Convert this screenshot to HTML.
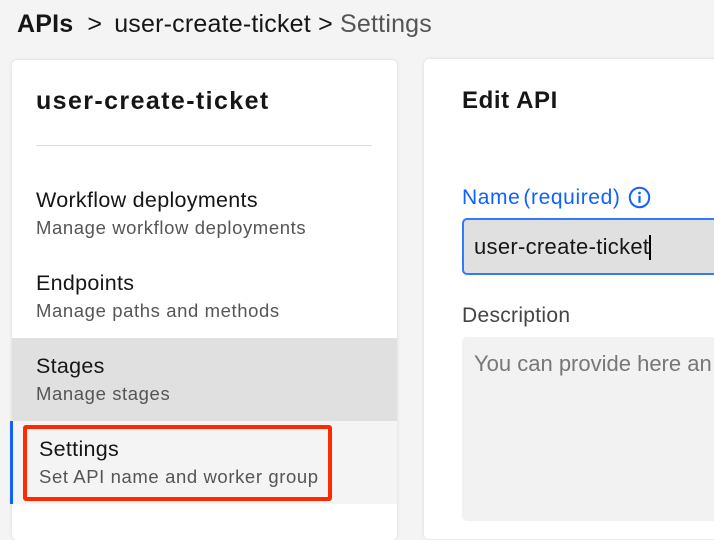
<!DOCTYPE html>
<html><head><meta charset="utf-8"><style>
*{margin:0;padding:0;box-sizing:border-box}
body{width:714px;height:528px;overflow:hidden;background:#f4f4f4;font-family:"Liberation Sans",Arial,sans-serif;position:relative;color:#161616}
.a{position:absolute;white-space:nowrap}
.card{position:absolute;background:#fff;border-radius:5px;box-shadow:0 0 3px rgba(0,0,0,.12)}
.t{font-size:21.5px;letter-spacing:0.3px;color:#161616;line-height:26px}
.s{font-size:18.5px;letter-spacing:0.6px;color:#555;line-height:22px}
</style></head><body>
<div class="a" style="left:17px;top:9px;font-size:25px;letter-spacing:0.2px;line-height:30px"><b>APIs</b><span style="margin:0 12px 0 14px">&gt;</span>user-create-ticket <span>&gt;</span> <span style="color:#555">Settings</span></div>

<div class="card" style="left:12px;top:60px;width:385px;height:480px"></div>
<div class="a" style="left:36px;top:86px;font-size:25px;letter-spacing:1.4px;font-weight:bold;line-height:30px">user-create-ticket</div>
<div class="a" style="left:36px;top:145px;width:336px;height:1px;background:#ddd"></div>

<div class="a t" style="left:36px;top:187px">Workflow deployments</div>
<div class="a s" style="left:36px;top:217px">Manage workflow deployments</div>
<div class="a t" style="left:36px;top:270px">Endpoints</div>
<div class="a s" style="left:36px;top:300px">Manage paths and methods</div>

<div class="a" style="left:12px;top:338px;width:385px;height:83px;background:#e0e0e0"></div>
<div class="a t" style="left:36px;top:353px">Stages</div>
<div class="a s" style="left:36px;top:383px">Manage stages</div>

<div class="a" style="left:12px;top:421px;width:385px;height:83px;background:#f4f4f4"></div>
<div class="a" style="left:10px;top:421px;width:3px;height:83px;background:#0f62fe"></div>
<div class="a" style="left:23px;top:425px;width:309px;height:76px;border:4px solid #ff2a00;border-radius:3px"></div>
<div class="a t" style="left:39px;top:436px">Settings</div>
<div class="a s" style="left:39px;top:466px">Set API name and worker group</div>

<div class="card" style="left:424px;top:59px;width:300px;height:480px"></div>
<div class="a" style="left:462px;top:87px;font-size:24px;letter-spacing:0.6px;font-weight:bold;line-height:28px">Edit API</div>
<div class="a" style="left:462px;top:185px;font-size:21px;letter-spacing:0.6px;color:#0f62fe;line-height:26px">Name<span style="margin-left:3px">(required)</span></div>
<svg class="a" style="left:628px;top:186px" width="23" height="23" viewBox="0 0 23 23"><circle cx="11.5" cy="11.5" r="9.7" fill="none" stroke="#0f62fe" stroke-width="2"/><circle cx="11.5" cy="7" r="1.4" fill="#0f62fe"/><rect x="10.4" y="9.8" width="2.2" height="7" fill="#0f62fe"/></svg>
<div class="a" style="left:462px;top:218px;width:270px;height:57px;background:#e0e0e0;border:2px solid #2f7bff;border-radius:5px"></div>
<div class="a" style="left:474px;top:234px;font-size:22px;letter-spacing:0.3px;line-height:26px">user-create-ticket<span style="display:inline-block;width:2px;height:25px;background:#000;vertical-align:-6px"></span></div>
<div class="a" style="left:462px;top:303px;font-size:21px;letter-spacing:0.3px;color:#444;line-height:26px">Description</div>
<div class="a" style="left:462px;top:337px;width:270px;height:184px;background:#f2f2f2;border-radius:5px"></div>
<div class="a" style="left:474px;top:351px;font-size:22px;color:#777;line-height:26px">You can provide here an</div>
</body></html>
